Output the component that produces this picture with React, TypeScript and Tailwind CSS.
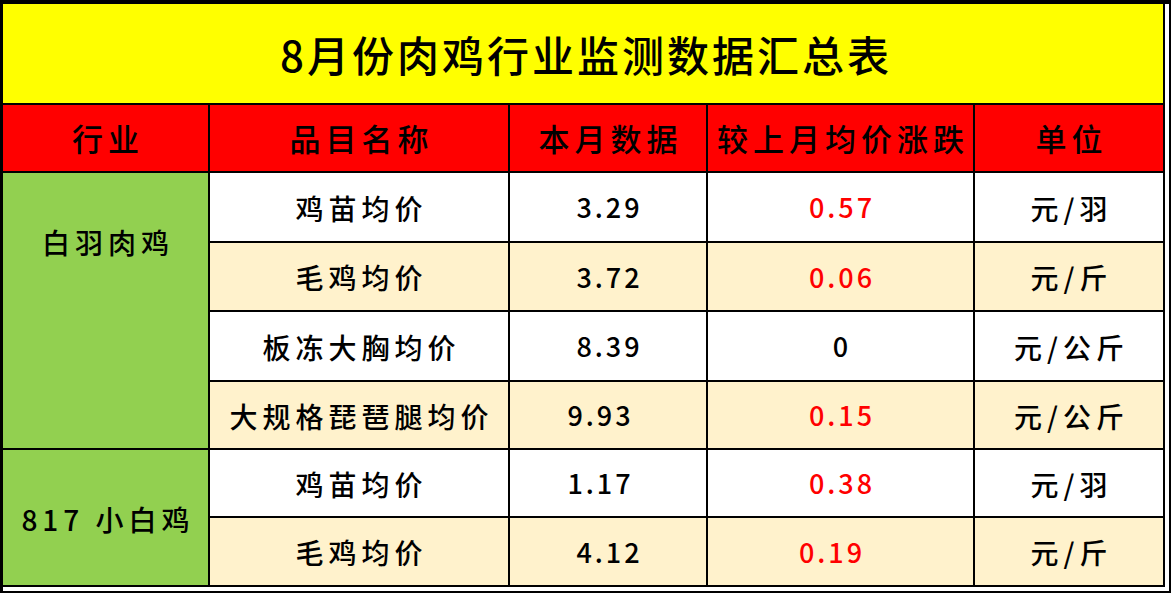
const rows = [
  { name: "鸡苗均价", val: "3.29", chg: "0.57", red: true, unit: "元/羽", bg: "bg-white", valShift: "", chgShift: "" },
  { name: "毛鸡均价", val: "3.72", chg: "0.06", red: true, unit: "元/斤", bg: "bg-[#fff2cc]", valShift: "", chgShift: "" },
  { name: "板冻大胸均价", val: "8.39", chg: "0", red: false, unit: "元/公斤", bg: "bg-white", valShift: "", chgShift: "" },
  { name: "大规格琵琶腿均价", val: "9.93", chg: "0.15", red: true, unit: "元/公斤", bg: "bg-[#fff2cc]", valShift: "pr-[18px]", chgShift: "" },
  { name: "鸡苗均价", val: "1.17", chg: "0.38", red: true, unit: "元/羽", bg: "bg-white", valShift: "pr-[18px]", chgShift: "" },
  { name: "毛鸡均价", val: "4.12", chg: "0.19", red: true, unit: "元/斤", bg: "bg-[#fff2cc]", valShift: "", chgShift: "pr-[20px]" },
];

const headers = ["行业", "品目名称", "本月数据", "较上月均价涨跌", "单位"];

const App = () => {
  return (
    <div className="w-[1171px] h-[593px] bg-black pt-[4px] pl-[3px] pr-[2px] pb-[2px] font-['Noto_Sans_CJK_SC','Noto_Sans',sans-serif] text-black">
      <div className="bg-white pr-[4px] pb-[4px]">
        <div className="grid grid-cols-[205px_298px_196px_265px_188px] grid-rows-[99px_66px_68px_67px_68px_66px_66px_67px] gap-[2px] bg-black pr-[2px] pb-[2px]">
          {/* title */}
          <div className="col-span-5 bg-[#ffff00] flex items-center justify-center pl-[6px] text-[42px] font-medium tracking-[3px]">
            8月份肉鸡行业监测数据汇总表
          </div>

          {/* header */}
          {headers.map((h) => (
            <div
              key={h}
              className="bg-[#ff0000] flex items-center justify-center pl-[5px] text-[31px] font-medium tracking-[5px]"
            >
              {h}
            </div>
          ))}

          {/* group 1 */}
          <div className="row-span-4 bg-[#92d050] flex justify-center pt-[48px] pl-[5px] text-[28px] font-medium tracking-[5px]">
            白羽肉鸡
          </div>
          {rows.slice(0, 4).map((r, i) => (
            <Row key={i} r={r} />
          ))}

          {/* group 2 */}
          <div className="row-span-2 bg-[#92d050] flex items-center justify-center pt-[3px] pl-[5px] text-[28px] font-medium tracking-[5px]">
            817 小白鸡
          </div>
          {rows.slice(4).map((r, i) => (
            <Row key={i + 4} r={r} />
          ))}
        </div>
      </div>
    </div>
  );
};

function Row({ r }: { r: (typeof rows)[number] }) {
  return (
    <>
      <div className={`${r.bg} flex items-center justify-center pt-[1px] pl-[5px] text-[28px] font-medium tracking-[5px]`}>
        {r.name}
      </div>
      <div className={`${r.bg} ${r.valShift} flex items-center justify-center pt-[1px] pl-[3px] text-[27px] font-medium tracking-[3px]`}>
        {r.val}
      </div>
      <div
        className={`${r.bg} ${r.chgShift} flex items-center justify-center pt-[1px] pl-[3px] text-[27px] font-medium tracking-[3px] ${
          r.red ? "text-[#ff0000]" : "text-black"
        }`}
      >
        {r.chg}
      </div>
      <div className={`${r.bg} flex items-center justify-center pt-[1px] pl-[5px] text-[28px] font-medium tracking-[5px]`}>
        {r.unit}
      </div>
    </>
  );
}

export default App;
